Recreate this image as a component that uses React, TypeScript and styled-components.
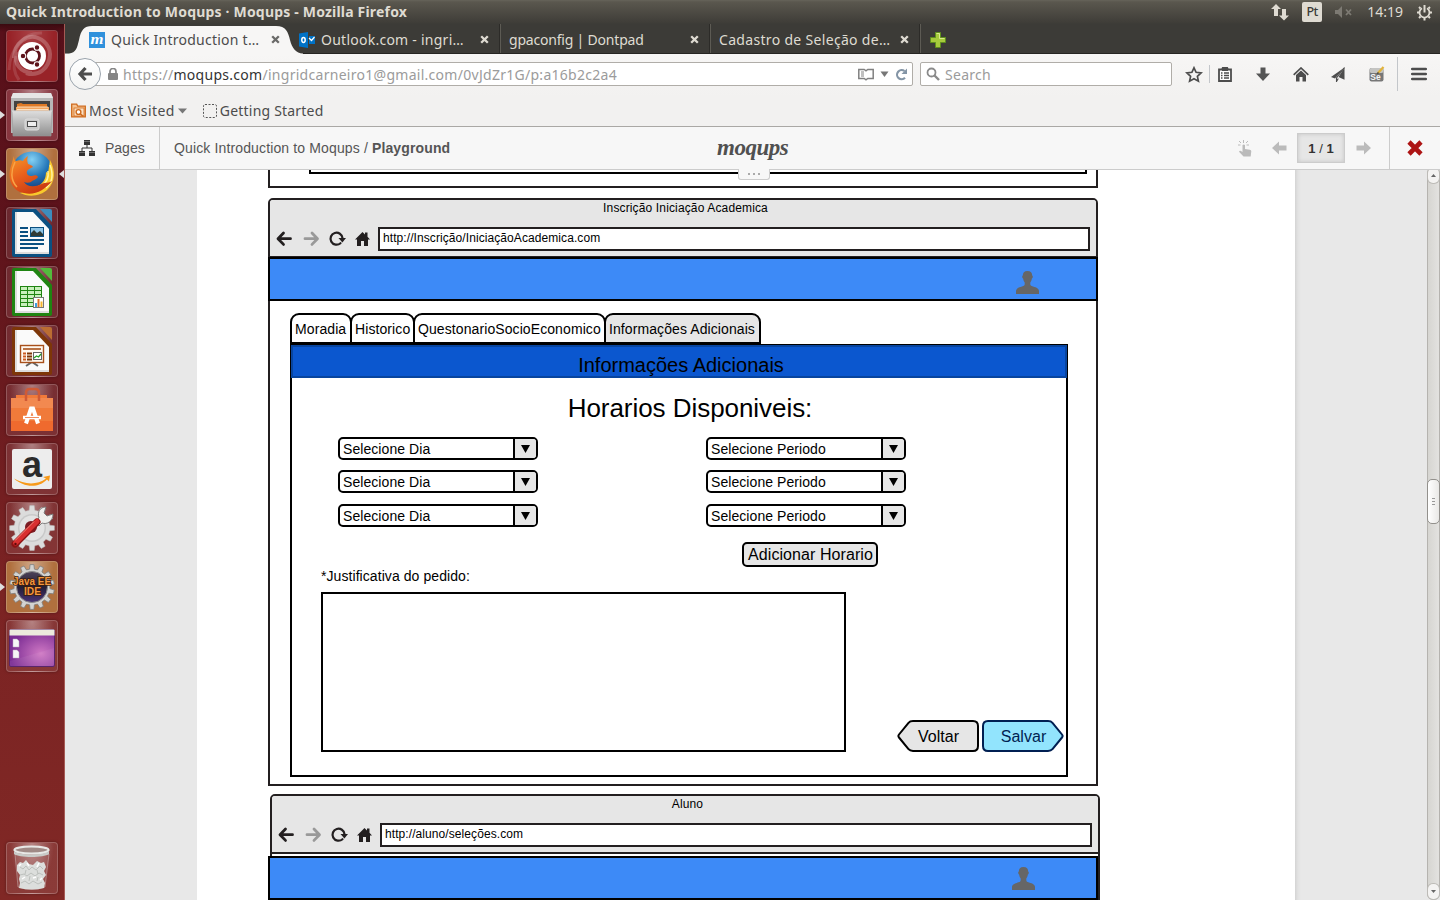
import React from "react";
import styled, { createGlobalStyle, css } from "styled-components";

const GlobalStyle = createGlobalStyle`
  * { box-sizing: border-box; }
  html, body { margin: 0; height: 100%; overflow: hidden; }
  body { font-family: "Liberation Sans", Arial, sans-serif; color: #000; }
  svg { display: block; flex: none; }
`;

const systemFont = css`
  font-family: "Noto Sans", "Open Sans", sans-serif;
`;

/* ---------- desktop shell ---------- */

const Desktop = styled.div`
  width: 1440px;
  height: 900px;
  overflow: hidden;
  display: flex;
  flex-direction: column;
`;

const TopPanel = styled.header`
  ${systemFont}
  height: 24px;
  flex: none;
  display: flex;
  align-items: center;
  padding: 0 7px 0 6px;
  color: #dfdbd2;
  background: linear-gradient(#66645a 0, #5a574e 2px, #403e39 22px, #3c3b37);
`;

const WindowTitle = styled.span`
  font-size: 14px;
  line-height: 22px;
  font-weight: 700;
  letter-spacing: 0.19px;
  flex: 1;
  white-space: nowrap;
`;

const Indicator = styled.span<{ $gap: number }>`
  display: flex;
  align-items: center;
  margin-right: ${(p) => p.$gap}px;
`;

const LanguageBadge = styled.span`
  width: 20px;
  height: 20px;
  border-radius: 2px;
  background: #dfdbd2;
  color: #3c3b37;
  font-size: 12.5px;
  font-weight: 500;
  letter-spacing: -0.4px;
  line-height: 20px;
  text-align: center;
`;

const Clock = styled.span`
  font-size: 14px;
  line-height: 22px;
`;

const Workspace = styled.div`
  flex: 1;
  min-height: 0;
  display: flex;
`;

/* ---------- launcher ---------- */

const Launcher = styled.nav`
  width: 65px;
  flex: none;
  display: flex;
  flex-direction: column;
  gap: 7px;
  padding: 6px 0 6px 6px;
  border-right: 1px solid #a55a55;
  background: linear-gradient(#3a0a10 0, #58101a 8px, #5d131b 200px, #7b2323 560px, #802825);
`;

const Tile = styled.div<{ $tint?: string; $last?: boolean }>`
  position: relative;
  width: 52px;
  height: 52px;
  flex: none;
  border-radius: 4px;
  border: 1px solid rgba(255, 255, 255, 0.2);
  margin-top: ${(p) => (p.$last ? "auto" : "0")};
  background: radial-gradient(ellipse at 50% 0, rgba(255, 255, 255, 0.38), rgba(255, 255, 255, 0) 62%),
    ${(p) => p.$tint ?? "rgba(255, 255, 255, 0.09)"};
  box-shadow: 0 0 3px rgba(0, 0, 0, 0.35);

  > svg {
    width: 52px;
    height: 52px;
    margin: -1px;
  }
`;

const Pip = styled.i<{ $side: "left" | "right" }>`
  position: absolute;
  top: 21px;
  ${(p) => (p.$side === "left" ? "left: -7px;" : "right: -7px;")}
  border: 4px solid transparent;
  border-width: 4px ${(p) => (p.$side === "left" ? "0 4px 5px" : "5px 4px 0")};
  ${(p) => (p.$side === "left" ? "border-left-color: #dedede;" : "border-right-color: #dedede;")}
`;

/* ---------- browser chrome ---------- */

const Browser = styled.main`
  flex: 1;
  min-width: 0;
  display: flex;
  flex-direction: column;
`;

const TabStrip = styled.div`
  ${systemFont}
  position: relative;
  height: 30px;
  flex: none;
  display: flex;
  padding-left: 16px;
  background: #3c3b37;
  border-bottom: 1px solid #262522;
`;

const ActiveTabShape = styled.svg`
  position: absolute;
  left: 0;
  top: 0;
`;

const BrowserTab = styled.div<{ $active?: boolean; $separated?: boolean }>`
  position: relative;
  width: 210px;
  height: 29px;
  padding: 3px 11px 0 8px;
  display: flex;
  align-items: center;
  gap: 6px;
  font-size: 14px;
  color: ${(p) => (p.$active ? "#4c4c4c" : "#dfdbd2")};
  ${(p) =>
    p.$separated &&
    css`
      border-right: 1px solid #5d5b54;
      box-shadow: inset -1px 0 #2c2b28;
    `}

  > svg:last-child {
    margin-bottom: 2px;
  }
`;

const TabLabel = styled.span<{ $spacing: number }>`
  flex: 1;
  line-height: 20px;
  white-space: nowrap;
  letter-spacing: ${(p) => p.$spacing}px;
`;

const NewTab = styled.div`
  padding: 8px 9px;
`;

const NavBar = styled.div`
  ${systemFont}
  height: 42px;
  flex: none;
  display: flex;
  align-items: center;
  padding: 0 13px 2px 4px;
  color: #9b9b9b;
  font-size: 14px;
  background: linear-gradient(#f7f6f5, #f2f1f0);
`;

const BackButton = styled.div`
  width: 32px;
  height: 32px;
  flex: none;
  border-radius: 50%;
  border: 1px solid #9aa3ac;
  background: linear-gradient(#fff, #f4f4f3);
  display: grid;
  place-items: center;
  z-index: 1;
`;

const Field = styled.div<{ $width: number; $joined?: boolean }>`
  width: ${(p) => p.$width}px;
  height: 24px;
  flex: none;
  display: flex;
  align-items: center;
  gap: 5px;
  border: 1px solid #b0ada8;
  border-radius: 2px;
  background: #fff;
  padding: 0 5px;
  margin-right: 7px;
  letter-spacing: 0.28px;
  ${(p) => p.$joined && "margin-left: -8px; padding: 0 4px 0 14px;"}
`;

const Address = styled.span`
  flex: 1;
  white-space: nowrap;

  b {
    font-weight: 400;
    color: #333;
  }
`;

const FieldIcons = styled.span`
  display: flex;
  align-items: center;
  gap: 6px;
`;

const ToolbarIcons = styled.div`
  flex: 1;
  display: flex;
  align-items: center;
  padding-left: 6px;
`;

const Tool = styled.span<{ $gap: number }>`
  margin-right: ${(p) => p.$gap}px;
`;

const ToolbarRule = styled.i<{ $height: number; $gap: number }>`
  width: 1px;
  height: ${(p) => p.$height}px;
  margin-right: ${(p) => p.$gap}px;
  background: #c3c6ca;
`;

const Bookmarks = styled.div`
  ${systemFont}
  height: 31px;
  flex: none;
  display: flex;
  align-items: center;
  padding: 0 6px 1px;
  font-size: 14px;
  color: #4c4c4c;
  background: #f2f1f0;
  border-bottom: 1px solid #aaa8a5;
`;

const Bookmark = styled.div<{ $spacing: number }>`
  display: flex;
  align-items: center;
  gap: 3px;
  margin-right: 16px;
  white-space: nowrap;
  letter-spacing: ${(p) => p.$spacing}px;
`;

/* ---------- Moqups application bar ---------- */

const AppBar = styled.div`
  position: relative;
  height: 43px;
  flex: none;
  display: flex;
  align-items: stretch;
  justify-content: space-between;
  background: #f7f7f7;
  border-bottom: 1px solid #ccc;
  font-size: 14px;
  color: #555;
  z-index: 2;
`;

const BarGroup = styled.div`
  display: flex;
  align-items: center;
`;

const HandIcon = styled.svg`
  margin-right: 20px;
`;

const PagesButton = styled.div`
  width: 95px;
  height: 100%;
  display: flex;
  align-items: center;
  gap: 10px;
  padding-left: 14px;
  border-right: 1px solid #ccc;
`;

const Crumbs = styled.div`
  padding-left: 14px;
  white-space: nowrap;
  letter-spacing: 0.135px;
`;

const Logo = styled.div`
  position: absolute;
  left: 652px;
  top: 6px;
  font: italic 700 23px/30px "Liberation Serif", "Times New Roman", serif;
  letter-spacing: -0.5px;
  color: #505050;
`;

const PullTab = styled.div`
  position: absolute;
  left: 673px;
  top: 42px;
  width: 32px;
  height: 11px;
  display: flex;
  justify-content: center;
  align-items: center;
  gap: 3px;
  background: #f7f7f7;
  border: 1px solid #ccc;
  border-top: 0;
  border-radius: 0 0 3px 3px;

  i {
    width: 2px;
    height: 2px;
    background: #aaa;
  }
`;

const PageCounter = styled.div`
  width: 48px;
  height: 30px;
  margin: 0 11px 0 10px;
  text-align: center;
  line-height: 29px;
  background: #e6e6e6;
  border: 1px solid #ccc;
  box-shadow: inset 0 0 4px rgba(0, 0, 0, 0.15);
  font-size: 13px;
  font-weight: 700;
  color: #333;

  span {
    font-weight: 400;
  }
`;

const CloseButton = styled.div`
  width: 51px;
  height: 100%;
  margin-left: 18px;
  border-left: 1px solid #ccc;
  display: grid;
  place-items: center;
`;

/* ---------- canvas ---------- */

const Stage = styled.div`
  flex: 1;
  min-height: 0;
  display: flex;
  background: #e8e8e8;
  padding-left: 132px;
`;

const Sheet = styled.div`
  width: 1098px;
  flex: none;
  overflow: hidden;
  padding-left: 71px;
  background: #fff;
`;

const Gutter = styled.div`
  flex: 1;
  background: linear-gradient(90deg, #d4d4d4, #e2e2e2 3px, #e8e8e8 6px);
`;

const ScrollTrack = styled.div`
  width: 13px;
  margin-top: -3px;
  display: flex;
  flex-direction: column;
  border: 1px solid #b5b3af;
  border-radius: 6px;
  background: linear-gradient(90deg, #d6d5d1, #e3e2e0);
  z-index: 1;
`;

const ScrollCap = styled.div`
  height: 15px;
  background: #f4f3f2;
  border-radius: 5px;
  display: grid;
  place-items: center;
  box-shadow: 0 0 0 1px #bdbbb7;
`;

const ScrollThumb = styled.div`
  margin: 296px -1px auto;
  height: 45px;
  border: 1px solid #92908c;
  border-radius: 5px;
  background: linear-gradient(90deg, #fff, #e9e8e6);
  display: flex;
  flex-direction: column;
  align-items: center;
  justify-content: center;
  gap: 2px;

  i {
    width: 3px;
    height: 1px;
    background: #999;
  }
`;

const ink = "#231f20";

const ClippedFrame = styled.div`
  width: 830px;
  height: 18px;
  border: 2px solid ${ink};
  border-top: 0;
  padding-left: 39px;
`;

const ClippedPanel = styled.div`
  width: 778px;
  height: 4px;
  border: 2px solid #000;
  border-top: 0;
`;

const Frame = styled.section<{ $height: number; $top: number; $shift?: number }>`
  width: 830px;
  height: ${(p) => p.$height}px;
  margin-top: ${(p) => p.$top}px;
  margin-left: ${(p) => p.$shift ?? 0}px;
  border: 2px solid ${ink};
  border-radius: 5px 5px 0 0;
`;

const FrameChrome = styled.div`
  height: 58px;
  background: #e6e6e6;
  border-bottom: 2px solid ${ink};
  border-radius: 3px 3px 0 0;
`;

const FrameTitle = styled.div`
  height: 27px;
  padding: 1px 0 0 5px;
  font-size: 12px;
  line-height: 14px;
  letter-spacing: 0.14px;
  text-align: center;
`;

const FrameNav = styled.div`
  height: 24px;
  display: flex;
  align-items: center;
  padding: 0 6px;
`;

const FrameUrl = styled.div`
  flex: 1;
  height: 24px;
  margin-left: 7px;
  border: 2px solid ${ink};
  background: #fff;
  padding: 2px 3px;
  font-size: 12px;
  line-height: 14px;
  letter-spacing: 0.08px;
`;

const BlueBar = styled.div<{ $lead: number; $left: number; $right: number; $iconTop: number }>`
  width: 830px;
  height: 44px;
  margin: ${(p) => p.$lead}px 0 0 ${(p) => p.$left}px;
  display: flex;
  justify-content: flex-end;
  padding: ${(p) => p.$iconTop}px ${(p) => p.$right}px 0 0;
  border: 2px solid #000;
  background: #3d8af7;
  position: relative;
`;

const MockTabs = styled.div`
  display: flex;
  margin: 12px 0 0 20px;
`;

const MockTab = styled.div<{ $width: number; $selected?: boolean }>`
  width: ${(p) => p.$width}px;
  height: 31px;
  margin-right: -2px;
  padding-left: 3px;
  border: 2px solid #000;
  border-radius: 9px 9px 0 0;
  background: ${(p) => (p.$selected ? "#e6e6e6" : "#fff")};
  font-size: 14px;
  line-height: 28px;
  letter-spacing: 0.09px;
  white-space: nowrap;
`;

const Panel = styled.div`
  width: 778px;
  height: 433px;
  margin-left: 20px;
  border: 2px solid #000;
`;

const PanelHeader = styled.h2`
  margin: -1px -1px 0;
  height: 33px;
  padding: 5px 0 0 4px;
  background: #0b57cf;
  border: 2px solid #08459f;
  font-size: 20px;
  font-weight: 400;
  line-height: 26px;
  text-align: center;
`;

const Heading = styled.h3`
  margin: 15px 0 14px;
  padding-left: 22px;
  font-size: 26px;
  line-height: 30px;
  letter-spacing: -0.05px;
  font-weight: 400;
  text-align: center;
`;

const SelectGrid = styled.div`
  display: grid;
  grid-template-columns: 200px 200px;
  grid-template-rows: 33px 34px 23px;
  column-gap: 168px;
  align-items: start;
  margin-left: 46px;
`;

const SelectBox = styled.div`
  height: 23px;
  display: flex;
  border: 2px solid #000;
  border-radius: 5px;
  overflow: hidden;
  background: #fff;
  font-size: 14px;
  line-height: 20px;
  letter-spacing: 0.07px;
`;

const SelectValue = styled.span`
  flex: 1;
  padding-left: 3px;
`;

const SelectArrow = styled.span`
  width: 23px;
  border-left: 2px solid #000;
  background: #e6e6e6;
  padding: 6px 0 0 6px;
`;

const AddButton = styled.div`
  width: 136px;
  height: 25px;
  margin: 15px 0 1px 450px;
  padding-left: 1px;
  border: 2px solid #000;
  border-radius: 5px;
  background: #e6e6e6;
  font-size: 16px;
  line-height: 21px;
  letter-spacing: 0.07px;
  text-align: center;
  white-space: nowrap;
`;

const FieldLabel = styled.div`
  margin-left: 29px;
  font-size: 14px;
  line-height: 16px;
  letter-spacing: 0.07px;
`;

const BottomRow = styled.div`
  display: flex;
  align-items: flex-end;
  gap: 3px;
  margin: 8px 0 0 29px;
`;

const TextArea = styled.div`
  width: 525px;
  height: 160px;
  margin-right: 48px;
  border: 2px solid #000;
`;

const ArrowButton = styled.div<{ $color: string }>`
  position: relative;
  width: 82px;
  height: 32px;
  padding-left: 1px;
  color: ${(p) => p.$color};
  font-size: 16px;
  line-height: 33px;
  text-align: center;
  letter-spacing: 0.05px;

  svg {
    position: absolute;
    inset: 0;
  }
  span {
    position: relative;
  }
`;

/* ---------- launcher drawings ---------- */

const UbuntuIcon = () => (
  <svg viewBox="0 0 52 52">
    <rect x="1" y="1" width="50" height="50" rx="3" fill="#a8282d" fillOpacity=".65" />
    <path d="M8 28C8 12 22 4 32 8c10 4 14 13 11 23M44 25c-1 14-12 22-24 18M26 43C14 42 8 34 10 22" fill="none" stroke="#fff" strokeOpacity=".22" strokeWidth="4" />
    <path d="M3 40C4 18 18 2 36 3M13 50c-6-8-6-16-3-24" fill="none" stroke="#fff" strokeOpacity=".12" strokeWidth="3" />
    <circle cx="26" cy="26" r="14" fill="#fff" />
    <circle cx="26.5" cy="26" r="7" fill="none" stroke="#5d131b" strokeWidth="2.8" />
    <g fill="#5d131b" stroke="#fff" strokeWidth="1.1">
      <circle cx="17" cy="26" r="2.8" />
      <circle cx="31" cy="17.5" r="2.8" />
      <circle cx="31" cy="34.5" r="2.8" />
    </g>
  </svg>
);

const FilesIcon = () => (
  <svg viewBox="0 0 52 52">
    <defs>
      <linearGradient id="cab" x2="0" y2="1">
        <stop stopColor="#dedede" />
        <stop offset="1" stopColor="#8e8e8e" />
      </linearGradient>
    </defs>
    <path d="M7 4h38l2 5v35H5V9z" fill="#b7b7b7" />
    <path d="M7 4h38l2 5H5z" fill="#e6e6e6" />
    <path d="M8 12h36v12H8z" fill="#454341" />
    <path d="M11 15l4-1 2 1h24v9H11z" fill="#e07a25" />
    <path d="M10 18h33v6H10z" fill="#f3a45c" />
    <path d="M11 18h31M11 20.500h31" stroke="#fff0d8" strokeWidth=".8" />
    <path d="M6 22h40l-1 25H7z" fill="url(#cab)" stroke="#989898" strokeWidth=".6" />
    <path d="M6 22h40" stroke="#e9e9e9" />
    <rect x="19" y="30" width="14" height="11" rx="2" fill="#c9c9c9" stroke="#ddd" />
    <rect x="21.500" y="32.500" width="9" height="5" fill="#eee" stroke="#4b4b4b" />
  </svg>
);

const FirefoxIcon = () => (
  <svg viewBox="0 0 52 52">
    <defs>
      <radialGradient id="globe" cx=".5" cy=".2" r=".8">
        <stop stopColor="#84d1f4" />
        <stop offset=".5" stopColor="#2477b9" />
        <stop offset="1" stopColor="#12316f" />
      </radialGradient>
      <linearGradient id="fox" x2=".6" y2="1">
        <stop stopColor="#f59a2a" />
        <stop offset=".5" stopColor="#e9601c" />
        <stop offset="1" stopColor="#c93a12" />
      </linearGradient>
    </defs>
    <circle cx="26" cy="24" r="20.500" fill="url(#globe)" />
    <path d="M44 12c6 11 5 22-2 29-8 8-20 8-28 4l16-6c7-3 10-8 10-15l2 1z" fill="#f9c92c" />
    <path d="M44 17c3 8 3 17-4 23M42 23c1 6-1 11-6 15" fill="none" stroke="#fff3a0" strokeWidth="1.500" />
    <path d="M8 8c0 2 0 4 2 5 3-1 5-1 7 0 1-2 3-4 5-5-1 3-1 5 0 8 2 1 4 1 5 3-2 1-5 2-6 4-1 4 2 5 5 5 3-1 5-1 6 1-2 3-5 3-7 5-2 1-5 1-7 0 4 6 12 5 20 1 4 0 6-1 8-2-7 9-18 15-28 12C5 43 1 29 5 18z" fill="url(#fox)" />
    <path d="M9 14c-4 8-5 18 2 25" fill="none" stroke="#f9a446" strokeWidth="1.500" />
  </svg>
);

const DocumentShell = ({ color, tint, children }: { color: string; tint: string; children: React.ReactNode }) => (
  <svg viewBox="0 0 52 52">
    <path d="M8 2h22l16 17v29q0 2-2 2H8q-2 0-2-2V4q0-2 2-2z" fill={color} />
    <path d="M9 5h18l16 17v25H9z" fill="#fafafa" />
    <path d="M9 5h2v42H9zM11 45h32v2H11z" fill="#ddd" />
    <path d="M34 2h10q2 0 2 2v11z" fill={tint} />
    {children}
  </svg>
);

const WriterIcon = () => (
  <DocumentShell color="#0b5081" tint="#3d8dbd">
    <path d="M14 21h8M14 25h8M14 29h8M14 33h24M14 37h24M14 41h18" stroke="#0b5081" strokeWidth="2" />
    <rect x="24.500" y="20.500" width="13" height="9" fill="#8ec5e6" stroke="#0b5081" />
    <path d="M25 29v-3l3-3 3 3 3-2 3 3v2z" fill="#2f3a35" />
  </DocumentShell>
);

const CalcIcon = () => (
  <DocumentShell color="#1f8411" tint="#53bb3c">
    <rect x="14" y="20" width="22" height="21" fill="#1f8411" />
    {[0, 1, 2, 3, 4].map((r) =>
      [0, 1, 2].map((c) => <rect key={`${r}${c}`} x={15 + c * 7} y={21 + r * 4} width="6" height="3" fill="#c8efbb" />)
    )}
    <rect x="27.500" y="31.500" width="10" height="10" fill="#fff" stroke="#777" />
    <path d="M29 37h2v4h-2z" fill="#3f9ddb" />
    <path d="M31.500 33h2v8h-2z" fill="#e06d20" />
    <path d="M34.500 35.500h2V41h-2z" fill="#f5b52d" />
  </DocumentShell>
);

const ImpressIcon = () => (
  <DocumentShell color="#7d3608" tint="#bb6d32">
    <path d="M20 41l6-4 6 4" fill="none" stroke="#666" strokeWidth="2" />
    <rect x="14.500" y="20.500" width="23" height="17" fill="#fff8ef" stroke="#a8501b" strokeWidth="1.400" />
    <path d="M17 24h18" stroke="#a8501b" strokeWidth="1.600" />
    <path d="M17 28.500h3M17 31.500h3M17 34.500h3" stroke="#cc5b20" strokeWidth="1.800" />
    <path d="M21 28.500h5M21 31.500h5M21 34.500h5" stroke="#7d3608" strokeWidth="1.800" />
    <rect x="27.500" y="27.500" width="8" height="7" fill="#fff" stroke="#666" />
    <path d="M28 33l2.500-2 2 1 2.500-3" fill="none" stroke="#22a022" strokeWidth="1.300" />
  </DocumentShell>
);

const SoftwareIcon = () => (
  <svg viewBox="0 0 52 52">
    <path d="M5 14h5v-3h31v3h6v33H5z" fill="#f07a3a" />
    <path d="M5 14h42v10H5z" fill="#f28950" />
    <path d="M5 37h42v10H5z" fill="#ef6a2e" />
    <path d="M20 17V9q0-4 4-4h5q4 0 4 4v8" fill="none" stroke="#cf5a35" strokeWidth="2.500" />
    <path d="M20 39.500l5-15h2l5 15" fill="none" stroke="#fff" strokeWidth="4" />
    <path d="M17 33.500h18" stroke="#fff" strokeWidth="3.500" />
    <path d="M19 33.500h14" stroke="#ee7035" strokeWidth=".8" />
  </svg>
);

const AmazonIcon = () => (
  <svg viewBox="0 0 52 52">
    <rect x="6" y="6" width="40" height="40" rx="2" fill="#ededed" />
    <text x="26" y="34" textAnchor="middle" fontFamily="Liberation Sans, Arial, sans-serif" fontWeight="700" fontSize="36" fill="#2b2b2b">a</text>
    <path d="M8 35.500c10 6 23 7 32 0l-3-1.500 7-1.500-1 6-2-2C32 46 17 44 8 35.500z" fill="#f79a1a" />
  </svg>
);

const gearPath = (cx: number, cy: number, teeth: number, outer: number, inner: number) => {
  const step = (Math.PI * 2) / teeth;
  const at = (a: number, r: number) => `${(cx + Math.cos(a) * r).toFixed(2)} ${(cy + Math.sin(a) * r).toFixed(2)}`;
  let d = "";
  for (let i = 0; i < teeth; i++) {
    const a = i * step - Math.PI / 2;
    d += `${i ? "L" : "M"}${at(a - step * 0.3, inner)}L${at(a - step * 0.19, outer)}L${at(a + step * 0.19, outer)}L${at(a + step * 0.3, inner)}`;
  }
  return d + "Z";
};

const SettingsIcon = () => (
  <svg viewBox="0 0 52 52">
    <path d={gearPath(26, 26, 12, 22.5, 18)} fill="#dcdcdc" stroke="#bbb" strokeWidth=".5" />
    <circle cx="26" cy="26" r="14" fill="#c9c9c9" />
    <circle cx="26" cy="26" r="12.500" fill="#e3e3e3" />
    <circle cx="25" cy="25" r="6" fill="#7a1c24" />
    <path d="M30 19l3-3c-2-6 1-11 7-11l-2 6 3 3 6-2c0 7-6 11-11 9l-3 3z" fill="#efefed" stroke="#777" strokeWidth=".9" />
    <path d="M9 42L31 20" stroke="#8d1212" strokeWidth="7" strokeLinecap="round" />
    <path d="M9.500 41L31 19.500" stroke="#d83030" strokeWidth="5" strokeLinecap="round" />
    <path d="M9 38.500L28 19.500" stroke="#f08a80" strokeWidth="1" />
    <circle cx="9.500" cy="42" r="1.200" fill="#5c0909" />
  </svg>
);

const EclipseIcon = () => (
  <svg viewBox="0 0 52 52">
    <defs>
      <linearGradient id="planet" x2="0" y2="1">
        <stop stopColor="#4d4358" />
        <stop offset=".5" stopColor="#231d35" />
        <stop offset="1" stopColor="#4a3577" />
      </linearGradient>
    </defs>
    <path d={gearPath(26, 26, 14, 22.5, 18)} fill="#d3d3d1" stroke="#7d7d7d" strokeWidth=".8" />
    <circle cx="26" cy="26" r="15.500" fill="url(#planet)" stroke="#8a8a8a" />
    <g fontFamily="Liberation Sans, Arial, sans-serif" fontSize="10.500" fontWeight="700" textAnchor="middle" fill="#f3963e" stroke="#3a1d0b" strokeWidth="1.600" paintOrder="stroke">
      <text x="26" y="24" textLength="38" lengthAdjust="spacingAndGlyphs">Java EE</text>
      <text x="26.500" y="34" textLength="17" lengthAdjust="spacingAndGlyphs">IDE</text>
    </g>
  </svg>
);

const DesktopIcon = () => (
  <svg viewBox="0 0 52 52">
    <defs>
      <radialGradient id="wall" cx=".7" cy=".65" r=".7">
        <stop stopColor="#cf78c4" />
        <stop offset="1" stopColor="#7a2c93" />
      </radialGradient>
    </defs>
    <rect x="3.500" y="9.500" width="45" height="37" rx="1.500" fill="url(#wall)" stroke="#59256b" />
    <path d="M3.500 15.500v-5q0-1 1-1h43q1 0 1 1v5z" fill="#eceadd" />
    <path d="M4 41l44-13v16q0 2-2 2H4z" fill="#fff" fillOpacity=".06" />
    <path d="M7 19h4l2 2v6H7zM7 30h4l2 2v6H7z" fill="#f6f6f6" stroke="#bca8c4" strokeWidth=".5" />
  </svg>
);

const TrashIcon = () => (
  <svg viewBox="0 0 52 52">
    <path d="M9 12l3 33q14 5 27 0l4-33z" fill="#fff" fillOpacity=".1" stroke="#e8e8e8" strokeOpacity=".35" />
    <path d="M11 23l3-3 3 1 3-3 3 4 4 1 4-4 4 2 3-1 2 5-2 4 2 4-3 4 2 4-1 5q-12 3-25 0l1-5-1-4 1-4-3-4z" fill="#dcdedc" />
    <path d="M14 25l3 2 3-3 3 4 3-3 4 3 4-4 3 3M14 33l4-1 3 2 4-3 4 3 4-3 4 2M15 41l4-2 4 3 4-3 5 3 4-2M20 28l-1 4M31 28l1 4M24 34l-1 5M32 35l-1 4" fill="none" stroke="#b4b8b4" strokeWidth=".8" />
    <path d="M13 24l2-2M21 21l2 3M33 21l-2 4M16 37l3-2M27 36l3-1M36 36l-2 2" fill="none" stroke="#fff" strokeWidth="1.500" />
    <ellipse cx="25.500" cy="8" rx="17" ry="3.500" fill="#a08a86" stroke="#e8e8e6" strokeWidth="2.200" />
    <path d="M8 9c3 4.500 32 4.500 35 0v3c-5 4-30 4-35 0z" fill="#c9cbc8" />
  </svg>
);

/* ---------- chrome drawings ---------- */

const CloseGlyph = ({ color }: { color: string }) => (
  <svg width="9" height="9" viewBox="0 0 9 9">
    <path d="M1.200 1.200l6.600 6.600M7.800 1.200L1.200 7.800" stroke={color} strokeWidth="2.300" />
  </svg>
);

const MoqupsFavicon = () => (
  <svg width="16" height="16" viewBox="0 0 16 16">
    <rect width="16" height="16" fill="#3091dc" />
    <text x="8" y="12" textAnchor="middle" fontFamily="Liberation Serif, serif" fontStyle="italic" fontWeight="700" fontSize="14" textLength="13" lengthAdjust="spacingAndGlyphs" fill="#fff">m</text>
  </svg>
);

const OutlookFavicon = () => (
  <svg width="16" height="16" viewBox="0 0 16 16">
    <path d="M0 1.500L9 0v16l-9-1.500z" fill="#0072c6" />
    <path d="M10 4h6v8h-6z" fill="#0072c6" />
    <path d="M10 6l2.500 2.500 3-3.500" fill="none" stroke="#fff" strokeWidth="1.200" />
    <ellipse cx="4.500" cy="8" rx="1.700" ry="2.400" fill="none" stroke="#fff" strokeWidth="1.500" />
  </svg>
);

const BackArrow = () => (
  <svg width="16" height="16" viewBox="0 0 16 16">
    <path d="M8.500 2L3 8l5.500 6M3.500 8H15" fill="none" stroke="#4d4d4d" strokeWidth="3.200" />
  </svg>
);

const MockNavIcons = () => (
  <svg width="95" height="18" viewBox="0 0 95 18">
    <g fill="none" strokeWidth="2.800" strokeLinecap="round" strokeLinejoin="round">
      <path d="M7.500 3L2 8.700l5.500 5.700M2.500 8.700h12" stroke={ink} />
      <path d="M36 3l5.500 5.700-5.500 5.700M41 8.700h-12" stroke="#999" />
      <path d="M64.500 13.200a6 6 0 1 1 2-5" stroke={ink} strokeWidth="2.200" />
    </g>
    <path d="M62.500 8h7.500l-3.600 4.500z" fill={ink} />
    <path d="M79 9.500L86.500 2l2.500 2.400V2.500h2.500v4.300L94 9.500h-2V16h-4v-5h-3v5h-4V9.500z" fill={ink} />
  </svg>
);

const UserIcon = () => (
  <svg width="24" height="23" viewBox="0 0 24 23">
    <path d="M11.500 0c3.300 0 4.700 2 4.700 4.500 1 .3.700 2.600-.3 3-.3 2-1 3-1.600 4 0 1.800-.2 3 1.400 3.600 3.600 1.300 7.300 2 7.300 5V23H0v-2.900c0-3 3.700-3.700 7.300-5 1.600-.6 1.400-1.800 1.400-3.600-.6-1-1.300-2-1.600-4-1-.4-1.300-2.700-.3-3C6.800 2 8.200 0 11.500 0z" fill="#666" />
  </svg>
);

const BigArrow = ({ flip }: { flip?: boolean }) => (
  <svg width="15" height="14" viewBox="0 0 15 14" transform={flip ? "scale(-1 1)" : undefined}>
    <path d="M0 7l7-6.500V4.500h7.500v5H7v4z" fill="#bbb" />
  </svg>
);

const launcherItems = [
  { icon: <UbuntuIcon />, tint: "rgba(190,50,50,.35)" },
  { icon: <FilesIcon />, tint: "rgba(180,90,100,.5)", left: true },
  { icon: <FirefoxIcon />, tint: "#b0703e", left: true, right: true },
  { icon: <WriterIcon /> },
  { icon: <CalcIcon /> },
  { icon: <ImpressIcon /> },
  { icon: <SoftwareIcon /> },
  { icon: <AmazonIcon /> },
  { icon: <SettingsIcon /> },
  { icon: <EclipseIcon />, tint: "#b0703e", left: true },
  { icon: <DesktopIcon /> },
];

const Select = ({ label }: { label: string }) => (
  <SelectBox>
    <SelectValue>{label}</SelectValue>
    <SelectArrow>
      <svg width="9" height="8" viewBox="0 0 9 8">
        <path d="M0 0h9L4.500 8z" />
      </svg>
    </SelectArrow>
  </SelectBox>
);

const MockChrome = ({ title, url }: { title: string; url: string }) => (
  <FrameChrome>
    <FrameTitle>{title}</FrameTitle>
    <FrameNav>
      <MockNavIcons />
      <FrameUrl>{url}</FrameUrl>
    </FrameNav>
  </FrameChrome>
);

export default function App() {
  return (
    <Desktop>
      <GlobalStyle />
      <TopPanel>
        <WindowTitle>Quick Introduction to Moqups · Moqups - Mozilla Firefox</WindowTitle>
        <Indicator $gap={13}>
          <svg width="18" height="18" viewBox="0 0 18 18" fill="#dfdbd2">
            <path d="M5 1l5 5H7v7H3V6H0zM13 17.500l-5-5h3V6h4v6.500h3z" />
          </svg>
        </Indicator>
        <Indicator $gap={13}>
          <LanguageBadge>Pt</LanguageBadge>
        </Indicator>
        <Indicator $gap={14}>
          <svg width="18" height="12" viewBox="0 0 18 12">
            <path d="M0 4h3l4-4v12L3 8H0z" fill="#7d7a73" />
            <path d="M11 3.500l5 5.500M16 3.500L11 9" stroke="#7d7a73" strokeWidth="1.800" />
          </svg>
        </Indicator>
        <Indicator $gap={13}>
          <Clock>14:19</Clock>
        </Indicator>
        <svg width="17" height="17" viewBox="0 0 17 17">
          <path d="M6 4.200a5 5 0 1 0 5 0" fill="none" stroke="#dfdbd2" strokeWidth="1.800" />
          <path d="M8.500 1v7.500M1 8.500h2M14 8.500h2M8.500 14v2.500M3 3l1.500 1.500M14 3l-1.500 1.500M3 14l1.500-1.500M14 14l-1.500-1.500" stroke="#dfdbd2" strokeWidth="2" />
        </svg>
      </TopPanel>

      <Workspace>
        <Launcher>
          {launcherItems.map((item, i) => (
            <Tile key={i} $tint={item.tint}>
              {item.left && <Pip $side="left" />}
              {item.right && <Pip $side="right" />}
              {item.icon}
            </Tile>
          ))}
          <Tile $last>
            <TrashIcon />
          </Tile>
        </Launcher>

        <Browser>
          <TabStrip>
            <ActiveTabShape width="240" height="30" viewBox="0 0 240 30">
              <path d="M0 30V29.500H4C11 29 12 24 14 16 16 6 19 2 27 2H211C221 2 223 8 225 16 227 24 231 29.500 238 29.500V30z" fill="#f7f6f5" />
            </ActiveTabShape>
            <BrowserTab $active>
              <MoqupsFavicon />
              <TabLabel $spacing={0.25}>Quick Introduction t…</TabLabel>
              <CloseGlyph color="#6a6a68" />
            </BrowserTab>
            <BrowserTab $separated>
              <OutlookFavicon />
              <TabLabel $spacing={0.25}>Outlook.com - ingri…</TabLabel>
              <CloseGlyph color="#dfdbd2" />
            </BrowserTab>
            <BrowserTab $separated>
              <TabLabel $spacing={-0.2}>gpaconfig | Dontpad</TabLabel>
              <CloseGlyph color="#dfdbd2" />
            </BrowserTab>
            <BrowserTab $separated>
              <TabLabel $spacing={0.32}>Cadastro de Seleção de…</TabLabel>
              <CloseGlyph color="#dfdbd2" />
            </BrowserTab>
            <NewTab>
              <svg width="16" height="16" viewBox="0 0 16 16">
                <path d="M5.500.5h5v5h5v5h-5v5h-5v-5h-5v-5h5z" fill="#a6ca3c" stroke="#5f8f1d" />
                <path d="M6.500 1.500h3v5h5" fill="none" stroke="#d8ea8c" />
              </svg>
            </NewTab>
          </TabStrip>

          <NavBar>
            <BackButton>
              <BackArrow />
            </BackButton>
            <Field $width={820} $joined>
              <svg width="10" height="12" viewBox="0 0 10 12">
                <path d="M2 6V3.500a3 3 0 0 1 6 0V6" fill="none" stroke="#858585" strokeWidth="1.700" />
                <rect y="5" width="10" height="7" rx="1" fill="#858585" />
              </svg>
              <Address>
                https://<b>moqups.com</b>/ingridcarneiro1@gmail.com/0vJdZr1G/p:a16b2c2a4
              </Address>
              <FieldIcons>
                <svg width="16" height="13" viewBox="0 0 16 13">
                  <path d="M.8 1.500h5.400L8 2.800l1.800-1.300h5.400v9H9.800L8 11.800l-1.800-1.300H.8z" fill="#fff" stroke="#808080" strokeWidth="1.500" />
                  <path d="M3 4h3M3 6h3M3 8h3" stroke="#808080" />
                </svg>
                <svg width="9" height="6" viewBox="0 0 9 6" fill="#777">
                  <path d="M.5.500h8L4.500 6z" />
                </svg>
                <svg width="13" height="13" viewBox="0 0 13 13">
                  <path d="M10 9.800A4.600 4.600 0 1 1 9.500 3" fill="none" stroke="#8495a6" strokeWidth="2.200" />
                  <path d="M12 .5V6H6.500z" fill="#8495a6" />
                </svg>
              </FieldIcons>
            </Field>
            <Field $width={252}>
              <svg width="14" height="14" viewBox="0 0 14 14" fill="none" stroke="#8a8a8a">
                <circle cx="5.500" cy="5.500" r="4" strokeWidth="1.800" />
                <path d="M8.500 8.500l4.500 4.500" strokeWidth="2.400" />
              </svg>
              <span>Search</span>
            </Field>
            <ToolbarIcons>
              <Tool $gap={6}>
                <svg width="18" height="17" viewBox="0 0 18 17">
                  <path d="M9 1.800l2.100 4.500 5 .6-3.700 3.400 1 4.900L9 12.800l-4.400 2.400 1-4.900L1.900 6.900l5-.6z" fill="none" stroke="#4d4d4d" strokeWidth="1.700" />
                </svg>
              </Tool>
              <ToolbarRule $height={18} $gap={8} />
              <Tool $gap={24}>
                <svg width="14" height="15" viewBox="0 0 14 15">
                  <path d="M1 2.500h3L5 .5h4l1 2h3V14H1z" fill="#fff" stroke="#4d4d4d" strokeWidth="1.800" />
                  <path d="M4 2.500L5 .5h4l1 2v1.500H4z" fill="#4d4d4d" />
                  <path d="M3 6h1.500M6 6h5M3 8.500h1.500M6 8.500h5M3 11h1.500M6 11h5" stroke="#4d4d4d" strokeWidth="1.300" />
                </svg>
              </Tool>
              <Tool $gap={23}>
                <svg width="14" height="15" viewBox="0 0 14 15">
                  <path d="M4.500 0.500h5v6H14l-7 7.500-7-7.500h4.500z" fill="#555" />
                </svg>
              </Tool>
              <Tool $gap={22}>
                <svg width="16" height="15" viewBox="0 0 16 15">
                  <path d="M.7 7.800L8 1l7.300 6.800" fill="none" stroke="#4d4d4d" strokeWidth="1.700" />
                  <path d="M3 8l5-4.500L13 8v6.500H9.500V10h-3v4.500H3z" fill="#4d4d4d" />
                </svg>
              </Tool>
              <Tool $gap={24}>
                <svg width="14" height="15" viewBox="0 0 14 15">
                  <path d="M13.500.5L0 10l4 1.500z" fill="#4d4d4d" />
                  <path d="M13.500.5L5.500 11v3.500l1.800-3" fill="none" stroke="#4d4d4d" strokeWidth="1.100" />
                  <path d="M13.500.5v12.300L7.500 10z" fill="#4d4d4d" />
                </svg>
              </Tool>
              <Tool $gap={12}>
                <svg width="16" height="16" viewBox="0 0 16 16">
                  <rect x=".5" y="2" width="14" height="13.500" rx="2" fill="#777" />
                  <rect x=".5" y="2" width="14" height="5" rx="2" fill="#c4c4c2" />
                  <text x="6.500" y="13.500" textAnchor="middle" fontFamily="Liberation Sans, sans-serif" fontWeight="700" fontSize="8.500" letterSpacing="0" fill="#f5f5f5">Se</text>
                  <path d="M9 7l5.500-6" stroke="#e2b33a" strokeWidth="2.200" />
                  <path d="M8.300 7.800l1.200-1.300" stroke="#444" strokeWidth="1.500" />
                </svg>
              </Tool>
              <ToolbarRule $height={34} $gap={13} />
              <svg width="16" height="14" viewBox="0 0 16 14">
                <path d="M1.200 2h13.600M1.200 7h13.600M1.200 12h13.600" stroke="#4d4d4d" strokeWidth="2.600" strokeLinecap="round" />
              </svg>
            </ToolbarIcons>
          </NavBar>

          <Bookmarks>
            <Bookmark $spacing={0.45}>
              <svg width="15" height="15" viewBox="0 0 15 15">
                <path d="M.7 13.800V1.200h5l1 2h7.600v10.600z" fill="#f6c391" stroke="#cf6a1c" strokeWidth="1.300" />
                <rect x="3" y="5" width="10" height="8" fill="#fbe0c4" stroke="#cf6a1c" strokeWidth=".8" />
                <circle cx="7.500" cy="9" r="2.400" fill="#fff" stroke="#cf6a1c" strokeWidth="1.400" />
                <path d="M9.300 10.800l3 2.700" stroke="#cf6a1c" strokeWidth="1.600" />
              </svg>
              <span>Most Visited</span>
              <svg width="9" height="6" viewBox="0 0 9 6" fill="#777">
                <path d="M0 .5h9l-4.500 5z" />
              </svg>
            </Bookmark>
            <Bookmark $spacing={0.2}>
              <svg width="14" height="14" viewBox="0 0 14 14">
                <rect x=".5" y=".5" width="13" height="13" rx="1.500" fill="none" stroke="#555" strokeDasharray="2 1.500" />
              </svg>
              <span>Getting Started</span>
            </Bookmark>
          </Bookmarks>

          <AppBar>
            <BarGroup>
              <PagesButton>
                <svg width="16" height="16" viewBox="0 0 16 16">
                  <path d="M5 0h6v5H5zM0 11h6v5H0zM10 11h6v5h-6z" fill="#333" />
                  <path d="M8 5v3M3 11V8h10v3" fill="none" stroke="#333" />
                  <path d="M5 1.500h6M0 12.500h6M10 12.500h6" stroke="#999" strokeWidth=".6" />
                </svg>
                Pages
              </PagesButton>
              <Crumbs>
                Quick Introduction to Moqups / <b>Playground</b>
              </Crumbs>
            </BarGroup>
            <Logo>moqups</Logo>
            <PullTab>
              <i />
              <i />
              <i />
            </PullTab>
            <BarGroup>
              <HandIcon width="14" height="17" viewBox="0 0 14 17">
                <path d="M4.500 5q1.200-1 2.500 0v4l4.800.8q1.500.3 1.500 1.500l-.6 5.200H5.500L1 11.800q.5-1.400 2-.7l1.500 1z" fill="#bbb" />
                <path d="M0 5h2.500M8.500 5H11M1 1l2 2M10 1L8 3M5.500 0v3" stroke="#bbb" />
              </HandIcon>
              <BigArrow />
              <PageCounter>
                1 <span>/</span> 1
              </PageCounter>
              <BigArrow flip />
              <CloseButton>
                <svg width="16" height="16" viewBox="0 0 16 16">
                  <path d="M2 2l12 12M14 2L2 14" stroke="#ad1414" strokeWidth="4.600" />
                </svg>
              </CloseButton>
            </BarGroup>
          </AppBar>

          <Stage>
            <Sheet>
              <ClippedFrame>
                <ClippedPanel />
              </ClippedFrame>

              <Frame $height={588} $top={10}>
                <MockChrome title="Inscrição Iniciação Academica" url="http://Inscrição/IniciaçãoAcademica.com" />
                <BlueBar $lead={-1} $left={-2} $right={56} $iconTop={12}>
                  <UserIcon />
                </BlueBar>
                <MockTabs>
                  <MockTab $width={62}>Moradia</MockTab>
                  <MockTab $width={65}>Historico</MockTab>
                  <MockTab $width={193}>QuestonarioSocioEconomico</MockTab>
                  <MockTab $width={157} $selected>
                    Informações Adicionais
                  </MockTab>
                </MockTabs>
                <Panel>
                  <PanelHeader>Informações Adicionais</PanelHeader>
                  <Heading>Horarios Disponiveis:</Heading>
                  <SelectGrid>
                    {[0, 1, 2].map((row) => (
                      <React.Fragment key={row}>
                        <Select label="Selecione Dia" />
                        <Select label="Selecione Periodo" />
                      </React.Fragment>
                    ))}
                  </SelectGrid>
                  <AddButton>Adicionar Horario</AddButton>
                  <FieldLabel>*Justificativa do pedido:</FieldLabel>
                  <BottomRow>
                    <TextArea />
                    <ArrowButton $color="#000">
                      <svg width="82" height="32" viewBox="0 0 82 32">
                        <path d="M16 1H76q5 0 5 5V26q0 5-5 5H16q-3 0-4.500-1.800L2 17.500q-1.200-1.500 0-3L11.500 2.800Q13 1 16 1z" fill="#e6e6e6" stroke="#000" strokeWidth="2" />
                      </svg>
                      <span>Voltar</span>
                    </ArrowButton>
                    <ArrowButton $color="#001f52">
                      <svg width="82" height="32" viewBox="0 0 82 32">
                        <path d="M66 1H6Q1 1 1 6V26q0 5 5 5H66q3 0 4.500-1.800L80 17.500q1.200-1.500 0-3L70.500 2.800Q69 1 66 1z" fill="#92e4fd" stroke="#001f52" strokeWidth="2" />
                      </svg>
                      <span>Salvar</span>
                    </ArrowButton>
                  </BottomRow>
                </Panel>
              </Frame>

              <Frame $height={300} $top={8} $shift={2}>
                <MockChrome title="Aluno" url="http://aluno/seleções.com" />
                <BlueBar $lead={2} $left={-4} $right={60} $iconTop={9}>
                  <UserIcon />
                </BlueBar>
              </Frame>
            </Sheet>
            <Gutter />
            <ScrollTrack>
              <ScrollCap>
                <svg width="5" height="3" viewBox="0 0 5 3">
                  <path d="M0 3h5L2.500 0z" fill="#666" />
                </svg>
              </ScrollCap>
              <ScrollThumb>
                <i />
                <i />
                <i />
              </ScrollThumb>
              <ScrollCap>
                <svg width="5" height="3" viewBox="0 0 5 3">
                  <path d="M0 0h5L2.500 3z" fill="#666" />
                </svg>
              </ScrollCap>
            </ScrollTrack>
          </Stage>
        </Browser>
      </Workspace>
    </Desktop>
  );
}
